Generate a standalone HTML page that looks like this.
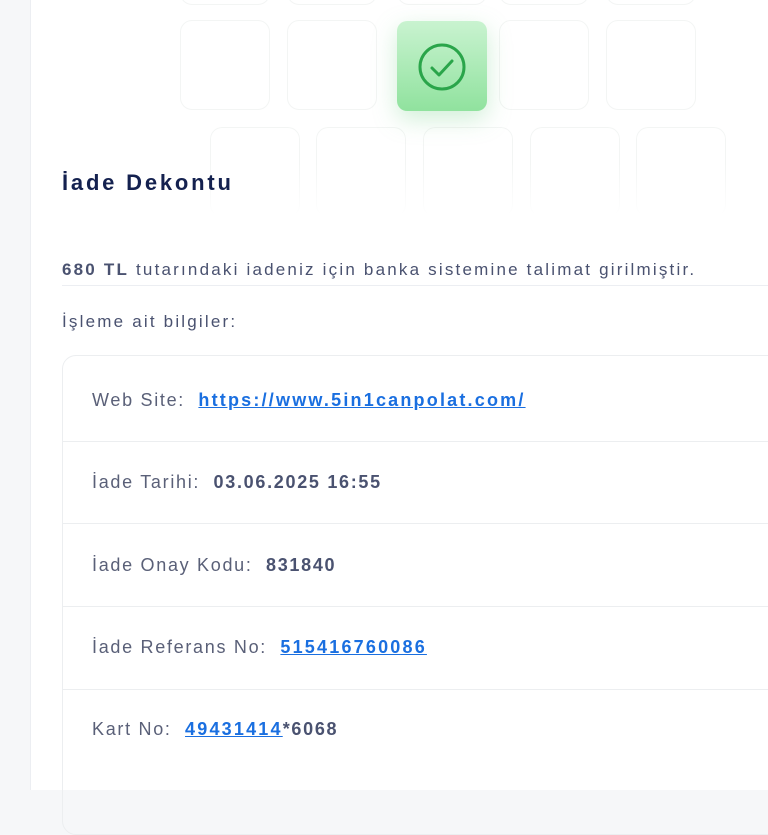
<!DOCTYPE html>
<html><head><meta charset="utf-8"><style>
*{margin:0;padding:0;box-sizing:border-box}
body{width:768px;height:768px;overflow:hidden;background:#f6f7f9;font-family:"Liberation Sans",sans-serif;position:relative}
.card{position:absolute;left:30px;top:-10px;width:760px;height:800px;background:#fff;border-left:1px solid #eceef2}
.t{position:absolute;width:90px;height:90px;border:1.5px solid #f3f5f4;border-radius:12px;background:#fff}
.r3{border-bottom-color:#fff;-webkit-mask-image:linear-gradient(#000 40%,transparent);mask-image:linear-gradient(#000 40%,transparent)}
.g{position:absolute;left:397px;top:21px;width:90px;height:90px;border-radius:10px;background:linear-gradient(#c9f3d0,#90e29e);box-shadow:0 8px 24px rgba(120,210,140,.35)}
h1{position:absolute;left:62px;top:170px;font-size:22px;font-weight:bold;color:#14214f;letter-spacing:2.8px}
.p{position:absolute;left:62px;font-size:17px;color:#4a5270;letter-spacing:2.2px}
.line{position:absolute;left:62px;top:285px;width:706px;height:1px;background:#eceef2}
.box{position:absolute;left:62px;top:355px;width:720px;height:480px;border:1.5px solid #eceef0;border-radius:14px}
.row{position:absolute;left:0;width:100%;border-top:1.5px solid #eceef0}
.lb{position:absolute;left:92px;font-size:18px;color:#5a6078;letter-spacing:1.7px}
.lb b{color:#4a5270}
a{color:#1a6fe0;font-weight:bold;text-decoration:underline;letter-spacing:2.2px}
</style></head><body>
<div class="card"></div>
<div class="t" style="left:180px;top:-85px"></div><div class="t" style="left:287px;top:-85px"></div><div class="t" style="left:397px;top:-85px"></div><div class="t" style="left:499px;top:-85px"></div><div class="t" style="left:606px;top:-85px"></div>
<div class="t" style="left:180px;top:20px"></div><div class="t" style="left:287px;top:20px"></div><div class="t" style="left:499px;top:20px"></div><div class="t" style="left:606px;top:20px"></div>
<div class="t r3" style="left:210px;top:127px"></div><div class="t r3" style="left:316px;top:127px"></div><div class="t r3" style="left:423px;top:127px"></div><div class="t r3" style="left:530px;top:127px"></div><div class="t r3" style="left:636px;top:127px"></div>
<div class="g"><svg width="90" height="90" viewBox="0 0 90 90"><circle cx="45" cy="46" r="22" fill="none" stroke="#2aa54a" stroke-width="3"/><path d="M35 47 L42 54 L55 40" fill="none" stroke="#2aa54a" stroke-width="3" stroke-linecap="round" stroke-linejoin="round"/></svg></div>
<h1>İade Dekontu</h1>
<div class="p" style="top:260px"><b>680 TL</b> tutarındaki iadeniz için banka sistemine talimat girilmiştir.</div>
<div class="line"></div>
<div class="p" style="top:312px">İşleme ait bilgiler:</div>
<div class="box">
<div class="row" style="top:85px"></div><div class="row" style="top:167px"></div><div class="row" style="top:250px"></div><div class="row" style="top:333px"></div>
</div>
<div class="lb" style="top:390px">Web Site:&nbsp; <a>https://www.5in1canpolat.com/</a></div>
<div class="lb" style="top:472px">İade Tarihi:&nbsp; <b>03.06.2025 16:55</b></div>
<div class="lb" style="top:555px">İade Onay Kodu:&nbsp; <b>831840</b></div>
<div class="lb" style="top:637px">İade Referans No:&nbsp; <a>515416760086</a></div>
<div class="lb" style="top:719px">Kart No:&nbsp; <a>49431414</a><b>*6068</b></div>
</body></html>
